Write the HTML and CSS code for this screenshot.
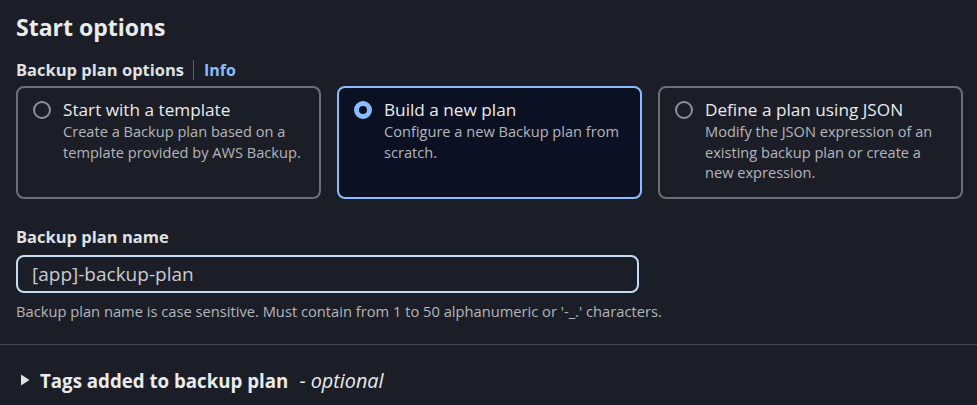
FILE: index.html
```html
<!DOCTYPE html>
<html>
<head>
<meta charset="utf-8">
<link rel="stylesheet" href="styles.css">
</head>
<body>
<div class="page">
  <section class="section">
    <h2 class="heading">Start options</h2>
    <div class="field-label-row">
      <span class="field-label">Backup plan options</span>
      <span class="sep"></span>
      <a class="info" href="#">Info</a>
    </div>
    <div class="tiles">
      <div class="tile">
        <span class="radio"></span>
        <div class="tile-body">
          <div class="tile-title">Start with a template</div>
          <div class="tile-desc">Create a Backup plan based on a template provided by AWS Backup.</div>
        </div>
      </div>
      <div class="tile selected">
        <span class="radio checked"></span>
        <div class="tile-body">
          <div class="tile-title">Build a new plan</div>
          <div class="tile-desc">Configure a new Backup plan from scratch.</div>
        </div>
      </div>
      <div class="tile">
        <span class="radio"></span>
        <div class="tile-body">
          <div class="tile-title">Define a plan using JSON</div>
          <div class="tile-desc">Modify the JSON expression of an existing backup plan or create a new expression.</div>
        </div>
      </div>
    </div>
    <div class="name-field">
      <div class="field-label">Backup plan name</div>
      <div class="input">[app]-backup-plan</div>
      <div class="hint">Backup plan name is case sensitive. Must contain from 1 to 50 alphanumeric or '-_.' characters.</div>
    </div>
  </section>
  <div class="divider"></div>
  <div class="expander">
    <svg class="caret" width="10" height="12" viewBox="0 0 10 12"><path d="M1 0.5 L9.5 6 L1 11.5 Z" fill="#dfe1e5"/></svg>
    <span class="exp-title">Tags added to backup plan</span>
    <span class="optional">- optional</span>
  </div>
</div>
</body>
</html>
```
FILE: styles.css
```css
* { box-sizing: border-box; }
html, body { margin: 0; padding: 0; }
body {
  background: #1b1e26;
  font-family: "Open Sans", "Noto Sans", sans-serif;
  color: #dfe1e5;
  width: 977px;
  height: 405px;
  overflow: hidden;
}
.page { display: flex; flex-direction: column; }
.section { padding: 11px 16px 0 16px; display: flex; flex-direction: column; }
.heading {
  margin: 0;
  font-size: 23px;
  line-height: 32px;
  font-weight: 700;
  color: #e9ebed;
}
.field-label-row {
  display: flex;
  align-items: center;
  margin-top: 15px;
  height: 24px;
}
.field-label {
  font-size: 16.5px;
  font-weight: 700;
  line-height: 24px;
  color: #dfe1e5;
}
.sep {
  width: 1px;
  height: 20px;
  background: #5a5e66;
  margin: 0 10px 0 9px;
}
.info {
  font-size: 16px;
  font-weight: 700;
  color: #89bdff;
  text-decoration: none;
}
.tiles {
  display: grid;
  grid-template-columns: 305px 305px 305px;
  gap: 16px;
  margin-top: 4px;
}
.tile {
  height: 113px;
  border: 2px solid #6b6f78;
  border-radius: 8px;
  padding: 11px 12px 0 15px;
  display: flex;
  gap: 12px;
}
.tile.selected {
  border-color: #89bdff;
  background: #0b1122;
}
.radio {
  flex: none;
  width: 18px;
  height: 18px;
  margin-top: 2px;
  border: 2px solid #8d9199;
  border-radius: 50%;
}
.radio.checked {
  border: 5px solid #89bdff;
  background: #0b1122;
}
.tile-body { display: flex; flex-direction: column; }
.tile-title {
  font-size: 17.2px;
  line-height: 22px;
  color: #e9ebed;
}
.tile-desc {
  font-size: 14.6px;
  line-height: 20.5px;
  color: #b3b6bc;
}
.name-field { display: flex; flex-direction: column; margin-top: 26px; }
.input {
  margin-top: 6px;
  width: 623px;
  height: 38px;
  border: 2px solid #c5dcf7;
  border-radius: 8px;
  padding: 0 14px;
  display: flex;
  align-items: center;
  font-size: 19px;
  color: #c9ccd1;
}
.hint {
  margin-top: 8px;
  font-size: 14.7px;
  line-height: 20px;
  color: #b3b6bc;
}
.divider {
  margin-top: 23px;
  height: 1px;
  background: #41454d;
}
.expander {
  display: flex;
  align-items: center;
  padding: 20px 0 0 20px;
  height: 50px;
}
.caret { margin-right: 10px; }
.exp-title {
  font-size: 18.7px;
  font-weight: 700;
  color: #e9ebed;
}
.optional {
  margin-left: 11px;
  font-size: 19.8px;
  font-style: italic;
  color: #e9ebed;
}
```
